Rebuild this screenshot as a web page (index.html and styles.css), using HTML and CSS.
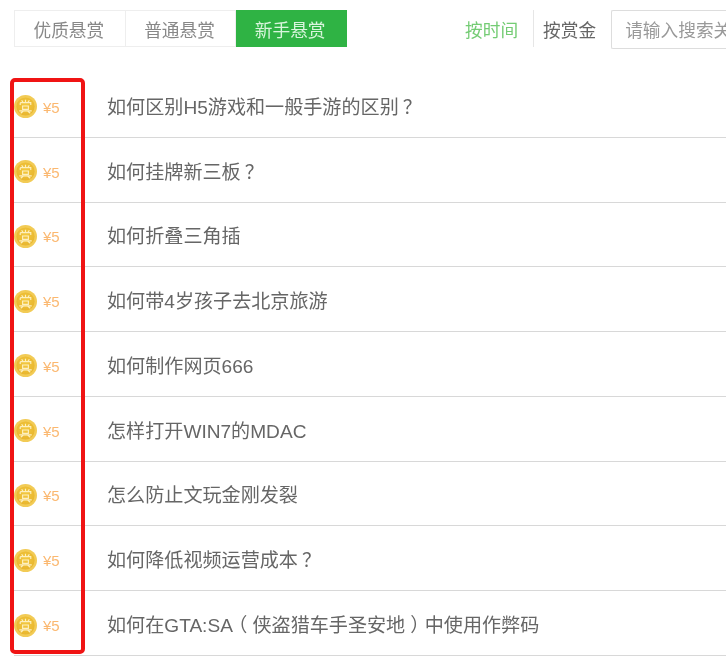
FILE: index.html
```html
<!DOCTYPE html>
<html lang="zh-CN">
<head>
<meta charset="utf-8">
<title>新手悬赏</title>
<link rel="stylesheet" href="styles.css">
</head>
<body>
<div class="page">
  <header class="toolbar">
    <nav class="tabs">
      <a class="tab">优质悬赏</a>
      <a class="tab">普通悬赏</a>
      <a class="tab tab-active">新手悬赏</a>
    </nav>
    <div class="sorts">
      <a class="sort sort-active">按时间</a>
      <a class="sort sort-money">按赏金</a>
    </div>
    <input class="search" type="text" placeholder="请输入搜索关键词">
  </header>
  <ul class="list">
    <li class="row"><span class="coin"><svg viewBox="0 0 24 24"><use href="#coin"/></svg></span><span class="money">¥5</span><span class="title">如何区别H5游戏和一般手游的区别<span class="question">？</span></span></li>
    <li class="row"><span class="coin"><svg viewBox="0 0 24 24"><use href="#coin"/></svg></span><span class="money">¥5</span><span class="title">如何挂牌新三板<span class="question">？</span></span></li>
    <li class="row"><span class="coin"><svg viewBox="0 0 24 24"><use href="#coin"/></svg></span><span class="money">¥5</span><span class="title">如何折叠三角插</span></li>
    <li class="row"><span class="coin"><svg viewBox="0 0 24 24"><use href="#coin"/></svg></span><span class="money">¥5</span><span class="title">如何带4岁孩子去北京旅游</span></li>
    <li class="row"><span class="coin"><svg viewBox="0 0 24 24"><use href="#coin"/></svg></span><span class="money">¥5</span><span class="title">如何制作网页666</span></li>
    <li class="row"><span class="coin"><svg viewBox="0 0 24 24"><use href="#coin"/></svg></span><span class="money">¥5</span><span class="title">怎样打开WIN7的MDAC</span></li>
    <li class="row"><span class="coin"><svg viewBox="0 0 24 24"><use href="#coin"/></svg></span><span class="money">¥5</span><span class="title">怎么防止文玩金刚发裂</span></li>
    <li class="row"><span class="coin"><svg viewBox="0 0 24 24"><use href="#coin"/></svg></span><span class="money">¥5</span><span class="title">如何降低视频运营成本<span class="question">？</span></span></li>
    <li class="row"><span class="coin"><svg viewBox="0 0 24 24"><use href="#coin"/></svg></span><span class="money">¥5</span><span class="title">如何在GTA:SA<span class="paren">（</span>侠盗猎车手圣安地<span class="paren">）</span>中使用作弊码</span></li>
  </ul>
  <div class="highlight"></div>
</div>
<svg class="defs" width="0" height="0">
  <defs>
    <radialGradient id="gold" cx="50%" cy="40%" r="60%">
      <stop offset="0" stop-color="#f3c93f"/>
      <stop offset="1" stop-color="#e8b52e"/>
    </radialGradient>
  </defs>
  <symbol id="coin" viewBox="0 0 24 24">
    <circle cx="12" cy="12" r="12" fill="#f2cb55"/>
    <circle cx="12" cy="12" r="9.500" fill="url(#gold)"/>
    <path d="M8 5.500l1.300 2M16 5.500l-1.300 2M12 5v2.500M6.500 8h11v2.500M6.500 8v2.500M9 11.500h6v3.500H9zM5.500 16.500h13M9.500 17l-2.500 2M14.500 17l2.500 2" fill="none" stroke="#fdf0c0" stroke-width="1.200"/>
  </symbol>
</svg>
</body>
</html>
```
FILE: styles.css
```css
* {
  box-sizing: border-box;
}

html, body {
  margin: 0;
  padding: 0;
  background: #fff;
  overflow: hidden;
}

body {
  width: 726px;
  height: 660px;
  font-family: "Liberation Sans", "Noto Sans CJK SC", sans-serif;
  color: #666;
}

.page {
  position: relative;
  width: 726px;
  height: 660px;
  overflow: hidden;
  filter: blur(0.55px);
}

.toolbar {
  display: flex;
  align-items: flex-start;
  height: 73px;
  padding: 10px 0 0 14px;
  white-space: nowrap;
}

.tabs {
  display: flex;
  flex: none;
  width: 333px;
  height: 38px;
}

.tab {
  flex: 1;
  display: flex;
  align-items: center;
  justify-content: center;
  height: 37px;
  padding-right: 2px;
  border: 1px solid #eee;
  border-left-width: 0;
  font-size: 17.7px;
  color: #888;
}

.tab:first-child {
  border-left-width: 1px;
}

.tab-active {
  background: #2fb344;
  border-color: #2fb344;
  color: #d8f5dc;
}

.sorts {
  display: flex;
  flex: none;
  height: 37px;
  margin-left: 118px;
}

.sort {
  display: flex;
  align-items: center;
  font-size: 17.7px;
}

.sort-active {
  color: #74cc74;
  padding-right: 15px;
  border-right: 1px solid #e6e6e6;
}

.sort-money {
  color: #666;
  padding-left: 9px;
}

.search {
  flex: none;
  width: 140px;
  height: 39px;
  margin-left: 15px;
  padding: 3px 0 0 13px;
  border: 1px solid #ddd;
  border-right: 0;
  border-radius: 2px 0 0 2px;
  outline: 0;
  font-family: inherit;
  font-size: 17.7px;
}

.search::placeholder {
  color: #999;
  opacity: 1;
}

.list {
  list-style: none;
  margin: 0 0 0 14px;
  padding: 0;
}

.row {
  display: flex;
  align-items: center;
  height: 64.78px;
  padding-top: 2px;
  border-bottom: 1px solid #d8d8d8;
}

.coin {
  width: 23px;
  height: 23px;
  flex: none;
  margin-top: 2px;
}

.coin svg {
  display: block;
  width: 23px;
  height: 23px;
}

.money {
  width: 70px;
  padding: 3px 0 0 6px;
  font-size: 15px;
  color: #fbb870;
}

.title {
  font-size: 19.1px;
  color: #666;
  white-space: nowrap;
}

.question {
  margin-left: 4px;
}

.paren {
  padding: 0 5px;
  font-feature-settings: "halt";
}

.highlight {
  position: absolute;
  left: 10px;
  top: 78px;
  width: 75px;
  height: 576px;
  border: 4px solid #f01414;
  border-radius: 5px;
}

.defs {
  position: absolute;
}
```
